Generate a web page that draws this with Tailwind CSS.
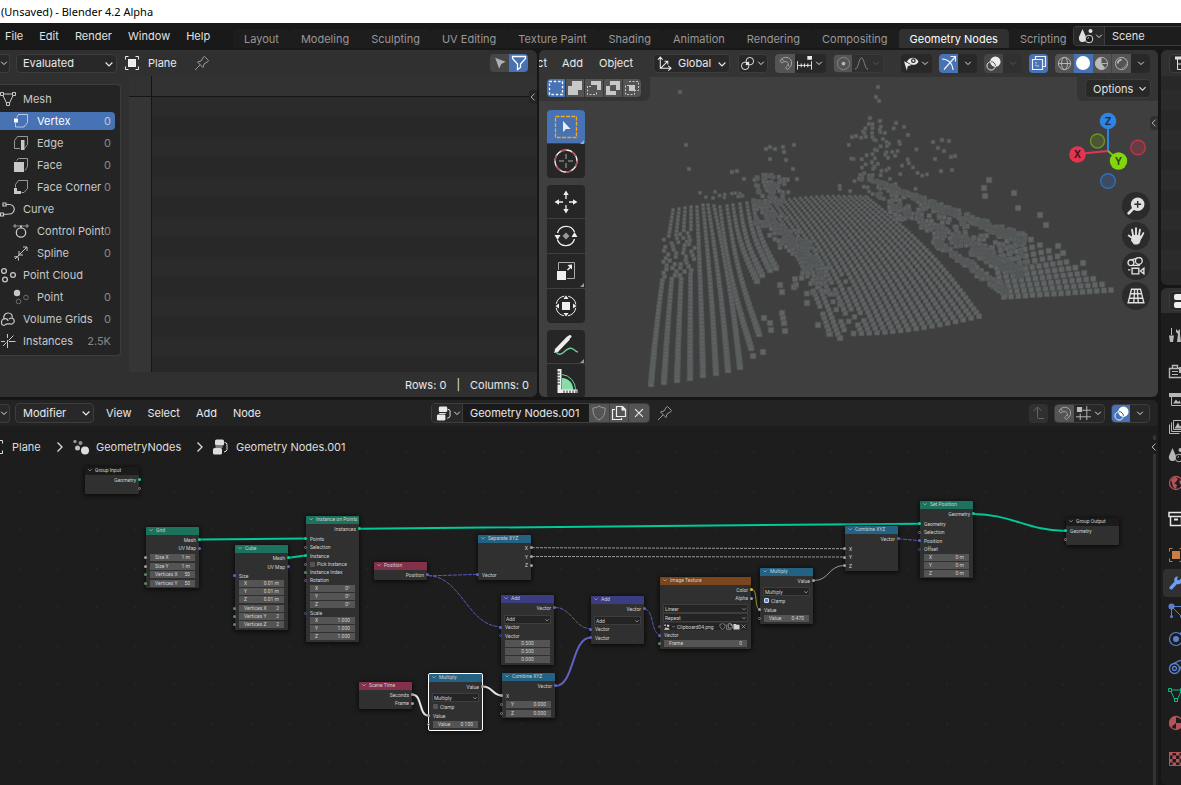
<!DOCTYPE html>
<html lang="en">
<head>
    <meta charset="UTF-8">
    <meta name="viewport" content="width=device-width, initial-scale=1.0">
    <title>(Unsaved) - Blender 4.2 Alpha</title>
    <script src="https://cdn.jsdelivr.net/npm/@tailwindcss/browser@4"></script>
</head>
<body class="h-screen overflow-hidden flex flex-col bg-[#161616] text-[#e0e0e0] text-[11px] leading-4 fill-none stroke-current font-['Inter','Liberation_Sans',sans-serif]">

<!-- Icon set, all on a 16px grid -->
<svg class="hidden">
    <symbol id="i-chev" viewBox="0 0 16 16"><path d="M3.500 6 8 10.500 12.500 6" stroke-width="1.5"/></symbol>
    <symbol id="i-left" viewBox="0 0 16 16"><path d="M10.500 2.500 5 8l5.500 5.500" stroke-width="1.500"/></symbol>
    <symbol id="i-right" viewBox="0 0 16 16"><path d="m5.500 3.500 4.500 4.500-4.500 4.500" stroke-width="1.3"/></symbol>
    <symbol id="i-object" viewBox="0 0 16 16"><path d="M1.500 4.500v-3h3M11.500 1.500h3v3M14.500 11.500v3h-3M4.500 14.500h-3v-3"/><rect x="4.500" y="4.500" width="7" height="7" fill="currentColor"/></symbol>
    <symbol id="i-pin" viewBox="0 0 16 16"><path d="m1 15 5-5M3.500 7l5.500 5.500 1-3.500 4-2.500.500-1L10.500 1.500l-1 .5L7 6z"/></symbol>
    <symbol id="i-cursor" viewBox="0 0 16 16"><path d="m2.500 2 12 4.500-5 2.500-2.500 5.500z" fill="currentColor" stroke="none"/></symbol>
    <symbol id="i-funnel" viewBox="0 0 16 16"><path d="M1.500 1.500h13v2l-5 5.500v3.500l-3 2V9l-5-5.500z" stroke-width="1.3"/></symbol>
    <symbol id="i-mesh" viewBox="0 0 16 16"><path d="M4 3h8M3 4.500l3.500 7.500M13 4.500l-3.500 7.500"/><path d="M.500 1.500h3v3h-3zM12.500 1.500h3v3h-3zM6.500 11.500h3v3h-3z"/></symbol>
    <symbol id="i-vertex" viewBox="0 0 16 16"><path d="M3.500 4.500 5.500 1.500h9v8l-3.500 4.500H2.500v-4" opacity=".6"/><path d="M1 5.500h4v4H1z" fill="currentColor" stroke="none"/></symbol>
    <symbol id="i-edge" viewBox="0 0 16 16"><path d="M7 13.500H1.500V5.500l3-4h10v8l-3 4" opacity=".7"/><path d="M8 5h3.500v10H8z" fill="currentColor" stroke="none"/></symbol>
    <symbol id="i-face" viewBox="0 0 16 16"><path d="M3.500 3.500l2-2h9v8l-2.500 4" opacity=".7"/><path d="M1 5h10v10H1z" fill="currentColor" stroke="none"/></symbol>
    <symbol id="i-corner" viewBox="0 0 16 16"><path d="M2.500 8.500V5.500l3-4h9v8l-3.500 4H8.500" opacity=".7"/><path d="M1 9h3v3h4v3H1z" fill="currentColor" stroke="none"/></symbol>
    <symbol id="i-curve" viewBox="0 0 16 16"><path d="M6 3.500h3.500a4.500 4.500 0 0 1 0 9.500L4 13.500M3 2h3v3H3zM.500 12h3v3h-3z" stroke-width="1.200"/></symbol>
    <symbol id="i-cpoint" viewBox="0 0 16 16"><circle cx="8" cy="9.500" r="4.700" stroke-width="1.300"/><path d="M4 3h8" opacity=".6"/><path d="M1 2h2v2H1zM13 2h2v2h-2z" opacity=".7"/><path d="M7 2.500h2v2H7z" fill="currentColor" stroke="none"/></symbol>
    <symbol id="i-spline" viewBox="0 0 16 16"><path d="m2 14 12-12M10 2h4v4M6 6v4h4M1 12l4-.5.500 4"/></symbol>
    <symbol id="i-pcloud" viewBox="0 0 16 16" stroke-width="1.300"><circle cx="4" cy="4" r="2.400"/><circle cx="13" cy="8" r="2.400"/><circle cx="5" cy="12.500" r="2.400"/></symbol>
    <symbol id="i-point" viewBox="0 0 16 16"><circle cx="4" cy="4" r="3.200" fill="currentColor" stroke="none"/><g opacity=".45"><circle cx="13" cy="8.500" r="2.300"/><circle cx="5.500" cy="12.500" r="2.300"/></g></symbol>
    <symbol id="i-volume" viewBox="0 0 16 16"><path d="M4 8c-1-3 1-6 4-6s5 2 4 5c3 1 3 5 0 6-2 .5-5-1-6.500.500-1 1.500-4 1-4-1.500S2 8 4 8zM4 8c2-1 4 0 4 2M12 7c-1 0-2 0-3 1" stroke-width="1.200"/></symbol>
    <symbol id="i-instance" viewBox="0 0 16 16"><path d="M1 8.500h4M7.500 1v4M7.500 7v8M9 8.500h6.500M8.500 7.500l5-5M6.500 9.500l-3.500 3.500"/></symbol>
    <symbol id="i-axes" viewBox="0 0 16 16"><path d="M3.500 1v12h11M1 4l2.500-3L6 4M12 10.500l3 2.500-3 2.500M4 13l7-7M8 5.500h3.500v3.500" stroke-width="1.100"/></symbol>
    <symbol id="i-pivot" viewBox="0 0 16 16"><circle cx="10.500" cy="5.500" r="4"/><circle cx="5.500" cy="10.500" r="4"/><path d="m6.500 9.500 3-3" stroke-width="2"/></symbol>
    <symbol id="i-magnet" viewBox="0 0 16 16"><path d="M2 5.500 4.500 2.500C9 0 14.500 2 14.500 7.500c0 3-1.500 4.500-4.500 7L8 12.500c3-2.500 4-4 2.500-5.500S6.500 5.500 4 7.500z"/><path d="m4 3 2 2.500M12 11l-2-1.500"/></symbol>
    <symbol id="i-snap" viewBox="0 0 16 16"><path d="M.500 5.500v9M15.500 5.500v9M1 10h14M4.500 8v4M8 8v4M11.500 8v4"/><path d="M11 0h5v4h-5z" fill="currentColor" stroke="none"/></symbol>
    <symbol id="i-prop" viewBox="0 0 16 16"><circle cx="8" cy="8" r="6.500" opacity=".55"/><circle cx="8" cy="8" r="2" fill="currentColor" stroke="none"/></symbol>
    <symbol id="i-falloff" viewBox="0 0 16 16"><path d="M1 14c4 0 4-12 7-12s3 12 7 12"/></symbol>
    <symbol id="i-visible" viewBox="0 0 16 16"><path d="M3 6C6 .500 13 .500 15.500 6 13 10 9 10 7 8.500" fill="currentColor" stroke="none"/><circle cx="10" cy="5" r="2.500" fill="#282828" stroke="none"/><circle cx="10" cy="5" r="1.200" fill="currentColor" stroke="none"/><path d="m0 5.500 8 4-4 1.500-1 4.500z" fill="currentColor" stroke="none"/></symbol>
    <symbol id="i-gizmo" viewBox="0 0 16 16"><path d="M1 4c6 0 10.500 4 11 11M3 14.500 14 2M9.500 1.500h5v5" stroke-width="1.200"/></symbol>
    <symbol id="i-overlay" viewBox="0 0 16 16"><circle cx="10" cy="6" r="5.500" fill="currentColor" stroke="none"/><circle cx="5.500" cy="10.500" r="4.500"/><path d="M5.500 6A4.500 4.500 0 0 1 10 10.500" stroke="#444"/></symbol>
    <symbol id="i-xray" viewBox="0 0 16 16"><path d="M1.500 4.500h10v10h-10zM4.500 4V1.500h10v10H12" stroke-width="1.200"/><path d="M5 7v4h4" stroke-dasharray="1.500 1.200"/></symbol>
    <symbol id="i-wire" viewBox="0 0 16 16"><circle cx="8" cy="8" r="6.500"/><ellipse cx="8" cy="8" rx="3.200" ry="6.500"/><path d="M1.500 8h13"/></symbol>
    <symbol id="i-solid" viewBox="0 0 16 16"><circle cx="8" cy="8" r="7" fill="currentColor" stroke="none"/></symbol>
    <symbol id="i-matprev" viewBox="0 0 16 16"><circle cx="8" cy="8" r="6.500"/><path d="M8 1.500A6.500 6.500 0 1 0 12 13L8 8z" fill="currentColor" stroke="none"/><path d="m8 8 6.500 0" /></symbol>
    <symbol id="i-rendered" viewBox="0 0 16 16"><circle cx="8" cy="8" r="6.500"/><path d="M4 8a4 4 0 0 1 4-4" stroke-width="2"/><path d="M8 13a5 5 0 0 0 5-5" opacity=".6"/></symbol>
    <symbol id="i-s1" viewBox="0 0 16 16"><path d="M1.500 1.500h13v13h-13z" stroke-dasharray="2.400 1.930" stroke-width="1.300"/></symbol>
    <symbol id="i-s2" viewBox="0 0 16 16"><path d="M5 1h10v9h-4v5H1V6h4z" fill="currentColor" stroke="none"/></symbol>
    <symbol id="i-s3" viewBox="0 0 16 16"><path d="M5 1h10v9h-4V5H5z" fill="currentColor" stroke="none"/><path d="M1.500 6v8.500h9V11M3 6.500h3" stroke-dasharray="2 1.500"/></symbol>
    <symbol id="i-s4" viewBox="0 0 16 16"><path d="M5 1h10v9h-4v5H1V6h4zm0 5v5h6V5H6z" fill="currentColor" fill-rule="evenodd" stroke="none"/></symbol>
    <symbol id="i-s5" viewBox="0 0 16 16"><path d="M5 5h6v6H5z" fill="currentColor" stroke="none"/><path d="M5 1.500h9.500v9H11M5 5.500H1.500v9h9V11" stroke-dasharray="2 1.500"/></symbol>
    <symbol id="i-scene" viewBox="0 0 16 16"><path d="M4.500 1 8 9c.5 3-1 5-3.500 5S.5 12 1 9z" fill="currentColor" stroke="none"/><circle cx="11" cy="11" r="3.800" fill="#1d1d1d"/><circle cx="12.500" cy="3" r="2" fill="currentColor" stroke="none"/><path d="M9.500 10.500 11 9.500"/></symbol>
    <symbol id="i-outliner" viewBox="0 0 16 16"><path d="M1 1.500h7v3H1z" fill="currentColor" stroke="none"/><path d="M3.500 4v10.500H9M3.500 9H9" /><path d="M10 7.500h6v3h-6zM10 13h6v3h-6z" fill="currentColor" stroke="none"/></symbol>
    <symbol id="i-geo" viewBox="0 0 16 16" stroke="none" fill="currentColor"><circle cx="12" cy="11.500" r="4"/><circle cx="4.500" cy="9" r="2.500" opacity=".85"/><circle cx="7.500" cy="4" r="2" opacity=".6"/><circle cx="2" cy="2.500" r="1.700" opacity=".6"/></symbol>
    <symbol id="i-tree" viewBox="0 0 16 16"><g fill="currentColor" stroke="none"><rect x="3" y=".5" width="9" height="6" rx="1.500"/><rect x="1" y="9" width="9" height="6.500" rx="1.500"/></g><path d="M3.500 8h7" stroke-width="1"/><path d="M12.500 3.500q2.500 0 2.500 2v5q0 2-3 2.500"/></symbol>
    <symbol id="i-shield" viewBox="0 0 16 16"><path d="M8 1q2 2 6 2c.5 6-2 10-6 12C4 13 1.500 9 2 3q4 0 6-2z"/></symbol>
    <symbol id="i-copy" viewBox="0 0 16 16"><path d="M5.500 1.500h6l3 3v7h-9zM4 4.500H1.500v10h9V13" stroke-width="1.200"/><path d="M10.500 1v4.500H15z" fill="currentColor" stroke="none"/></symbol>
    <symbol id="i-x" viewBox="0 0 16 16"><path d="m3.500 3.500 9 9M12.500 3.500l-9 9" stroke-width="1.200"/></symbol>
    <symbol id="i-up" viewBox="0 0 16 16"><path d="M6.500 2v10.500q0 1 1 1H13M2.500 6l4-4 4 4"/></symbol>
    <symbol id="i-grid" viewBox="0 0 16 16"><path d="M4.500 8v7M11.500 0v15M7 4.500h9M0 11.500h16"/><path d="M1 1h5.500v5.500H1z" fill="currentColor" stroke="none"/></symbol>
    <symbol id="i-zoom" viewBox="0 0 16 16"><circle cx="9.500" cy="6.500" r="6" fill="currentColor" stroke="none"/><path d="m5.500 10.500-4 4" stroke-width="2.400" stroke-linecap="round"/><path d="M9.500 3.500v6M6.500 6.500h6" stroke="#2b2b2b" stroke-width="1.300"/></symbol>
    <symbol id="i-hand" viewBox="0 0 16 16"><path d="M5.500 8 4.500 2.500M8 7.500V1M10.500 8l1-5.500M12.500 9.500l2-4M5 10 1.500 7.500" stroke-width="1.700" stroke-linecap="round"/><path d="M4.700 7h6.500l2 1.500-2 6-2 1h-3L3.500 12z" fill="currentColor" stroke="none"/></symbol>
    <symbol id="i-cam" viewBox="0 0 16 16" stroke-width="1.200"><circle cx="3.500" cy="5" r="2.600"/><circle cx="10.500" cy="3.500" r="3"/><path d="M4 2.500 9 1M4.500 7.500h7"/><path d="M4.500 10h6v5h-6zM3 11.500H1M15 10v5l-3-2.500z"/></symbol>
    <symbol id="i-persp" viewBox="0 0 16 16" stroke-width="1.200"><path d="M4 2h8l3 12H1zM3 6h10M2 10h12M6.800 2 6 14M9.200 2l.8 12"/></symbol>
    <symbol id="i-tool" viewBox="0 0 16 16"><path d="M3.500 1v7" /><path d="M1 8.500h5L5 15H2zM8 2l2 2 2-2v5l1 8H9l1-8-2-2z" fill="currentColor" stroke="none"/></symbol>
    <symbol id="i-render" viewBox="0 0 16 16"><path d="M1.500 5.500h13v9h-13zM4.500 5V2.500h5V5" stroke-width="1.400"/><path d="M4 8.500h6M4 11.500h6"/><path d="M11 4h4v6h-4z" fill="currentColor" stroke="none"/></symbol>
    <symbol id="i-output" viewBox="0 0 16 16"><path d="M1 2h14v4H1z" fill="currentColor" stroke="none"/><path d="M3.500 6v8.500h10V6"/><path d="m5 12.500 3-4 2 2.500 1.500-1.500 1.500 3z" fill="currentColor" stroke="none"/></symbol>
    <symbol id="i-layers" viewBox="0 0 16 16"><path d="M5.500 1.500h10v9h-10zM3.500 3.500v9h10M1.500 5.500v9h10"/><path d="m6.500 9.500 3.500-6 2 4 1-1 2 3z" fill="currentColor" stroke="none"/></symbol>
    <symbol id="i-world" viewBox="0 0 16 16"><circle cx="8" cy="8" r="6.500" stroke-width="1.300"/><path d="m3 5 4-3 3 2-2 3-2 1 3 2-1 4-3-2-1-4zM11 6l3-1v5l-2-1z" fill="currentColor" stroke="none"/></symbol>
    <symbol id="i-coll" viewBox="0 0 16 16"><path d="M1 1.500h14v4H1zM2.500 6v8.500h11V6" stroke-width="1.500"/><path d="M6 8.500h4" stroke-width="2"/></symbol>
    <symbol id="i-wrench" viewBox="0 0 16 16"><path d="M14 2.500 11 5.500 9 4.500l1-3C7 1 5.500 4 6.500 6.500L1.500 12q-.5 3 2.500 2.500l5-5.500c3 1 6-1.500 5-6.500z" fill="currentColor" stroke="none"/></symbol>
    <symbol id="i-parts" viewBox="0 0 16 16"><path d="m4 4 9 9M4 3.500h9M3.500 4v9"/><g fill="currentColor" stroke="none"><circle cx="3.500" cy="3.500" r="3"/><circle cx="14" cy="3.500" r="1.300"/><circle cx="3.500" cy="13.500" r="1.500"/><circle cx="13.500" cy="13.500" r="1.500"/></g></symbol>
    <symbol id="i-phys" viewBox="0 0 16 16"><circle cx="8" cy="8" r="6.500" stroke-width="1.200"/><circle cx="8" cy="8" r="3" fill="currentColor" stroke="none"/><circle cx="13.500" cy="2.500" r="1.500" fill="currentColor" stroke="none"/></symbol>
    <symbol id="i-constr" viewBox="0 0 16 16" stroke-width="1.300"><circle cx="6.500" cy="9.500" r="5"/><circle cx="6.500" cy="9.500" r="2"/><path d="M2.500 6 12 1.500q3 0 3 2.500L11 12"/></symbol>
    <symbol id="i-mat" viewBox="0 0 16 16"><circle cx="8" cy="8" r="6.500" stroke-width="1.300"/><path d="M8 8V1.500A6.500 6.500 0 0 0 3 12.500zM8 8h6.500A6.500 6.500 0 0 1 8 14.500z" fill="currentColor" stroke="none"/></symbol>
    <symbol id="i-tex" viewBox="0 0 16 16"><path d="M1.500 1.500h13v13h-13z"/><path d="M1 1h3.500v3.500H1zM8 1h3.500v3.500H8zM4.500 4.500H8V8H4.500zM11.500 4.500H15V8h-3.500zM1 8h3.500v3.500H1zM8 8h3.500v3.500H8zM4.500 11.500H8V15H4.500zM11.500 11.500H15V15h-3.500z" fill="currentColor" stroke="none"/></symbol>
    <symbol id="i-image" viewBox="0 0 16 16"><path d="M1 1h4v4H1zM8 2h6v5H8z" fill="currentColor" stroke="none"/><path d="m0 15 5-7 3 4 3-3 4 6z" fill="currentColor" stroke="none"/></symbol>
    <symbol id="i-folder" viewBox="0 0 16 16"><path d="M1 2h6l1 2h7v11H1z" fill="currentColor" stroke="none"/></symbol>
</svg>

<!-- Window title -->
<header class="h-[23px] shrink-0 bg-white text-black pl-px leading-[23px] font-['Noto_Sans','Liberation_Sans',sans-serif] text-[11px] whitespace-nowrap">(Unsaved) - Blender 4.2 Alpha</header>

<!-- Top bar -->
<div class="h-[27px] shrink-0 bg-[#181818] flex whitespace-nowrap overflow-hidden">
    <nav class="flex w-[233px] shrink-0 pl-[5px] gap-4 leading-[26px] h-[26px]">
        <button>File</button>
        <button>Edit</button>
        <button>Render</button>
        <button>Window</button>
        <button>Help</button>
    </nav>
    <nav class="flex flex-1 min-w-0 overflow-hidden mt-[6px] h-[19px] leading-[20px] text-[#989898]">
        <a href="#" class="px-[11px] bg-[#1d1d1d] rounded-t">Layout</a>
        <a href="#" class="px-[11px] bg-[#1d1d1d] rounded-t">Modeling</a>
        <a href="#" class="px-[11px] bg-[#1d1d1d] rounded-t">Sculpting</a>
        <a href="#" class="px-[11px] bg-[#1d1d1d] rounded-t">UV Editing</a>
        <a href="#" class="px-[11px] bg-[#1d1d1d] rounded-t">Texture Paint</a>
        <a href="#" class="px-[11px] bg-[#1d1d1d] rounded-t">Shading</a>
        <a href="#" class="px-[11px] bg-[#1d1d1d] rounded-t">Animation</a>
        <a href="#" class="px-[11px] bg-[#1d1d1d] rounded-t">Rendering</a>
        <a href="#" class="px-[11px] bg-[#1d1d1d] rounded-t">Compositing</a>
        <a href="#" class="px-[11px] bg-[#303030] text-white rounded-t">Geometry Nodes</a>
        <a href="#" class="pl-[11px] bg-[#1d1d1d] rounded-t">Scripting</a>
    </nav>
    <div class="flex w-[108px] shrink-0 mt-[3px] h-5 border border-r-0 border-[#3d3d3d] rounded-l bg-[#1d1d1d]">
        <button class="flex items-center w-[31px] pl-1 border-r border-[#3d3d3d] bg-[#282828]" aria-label="Browse scene"><svg class="size-4"><use href="#i-scene"/></svg><svg class="size-[10px]"><use href="#i-chev"/></svg></button>
        <input class="flex-1 min-w-0 pl-[7px] outline-none" aria-label="Scene name" value="Scene">
    </div>
</div>

<div class="flex-1 min-h-0 flex gap-[3px]">
<main class="flex-1 min-w-0 grid grid-cols-[537fr_619fr] grid-rows-[347fr_385fr] gap-x-[2px] gap-y-[3px]">

    <!-- Spreadsheet editor -->
    <section class="relative min-w-0 min-h-0 bg-[#303030] rounded-r-md overflow-hidden flex flex-col">
        <div class="h-[26px] shrink-0 flex items-center pr-[9px] text-white/90">
            <button class="flex items-center justify-end w-[10px] h-[19px] mr-[6px] bg-[#282828] border border-l-0 border-[#3d3d3d] rounded-r" aria-label="Editor type"><svg class="size-[10px] shrink-0"><use href="#i-chev"/></svg></button>
            <div class="relative w-[101px]">
                <select aria-label="Object evaluation state" class="appearance-none w-full h-[19px] pl-[6px] bg-[#282828] border border-[#3d3d3d] rounded outline-none"><option>Evaluated</option><option>Original</option></select>
                <svg class="absolute right-[2px] top-1 size-3 pointer-events-none"><use href="#i-chev"/></svg>
            </div>
            <svg class="size-4 ml-[7px]"><use href="#i-object"/></svg>
            <span class="ml-2 w-[30px]">Plane</span>
            <button class="ml-4 text-[#999]" aria-label="Pin"><svg class="size-4"><use href="#i-pin"/></svg></button>
            <div class="flex ml-auto">
                <button class="w-[19px] h-[18px] flex items-center justify-center bg-[#464646] text-[#b0b0b0] rounded-l" aria-label="Selected only"><svg class="size-[14px]"><use href="#i-cursor"/></svg></button>
                <button class="w-[19px] h-[18px] flex items-center justify-center bg-[#4772b3] text-white rounded-r" aria-label="Filter"><svg class="size-4"><use href="#i-funnel"/></svg></button>
            </div>
        </div>
        <div class="flex-1 min-h-0 flex">
            <div class="w-[129px] shrink-0 pt-2">
                <ul class="w-[121px] pt-[3px] pb-[3px] bg-[#242424] border border-l-0 border-[#3d3d3d] rounded-r text-[#c8c8c8]" id="domains"></ul>
            </div>
            <div class="flex-1 min-w-0 flex flex-col">
                <div class="h-5 shrink-0 flex bg-[#323232]"><div class="w-[23px] border-r border-[#151515]"></div></div>
                <div class="flex-1 flex border-t border-[#151515] bg-[repeating-linear-gradient(#2b2b2b_0_20px,#282828_20px_40px)]"><div class="w-[23px] bg-[#353535] border-r border-[#151515]"></div></div>
            </div>
        </div>
        <div class="h-[25px] shrink-0 flex items-center justify-end pr-2 gap-[10px] text-white/90"><span>Rows: 0</span><span>|</span><span>Columns: 0</span></div>
        <button class="absolute right-0 top-10 w-2 h-[14px] flex items-center justify-center bg-[#252525] rounded-l-sm text-[#bbb]" aria-label="Show sidebar"><svg class="size-[10px] shrink-0"><use href="#i-left"/></svg></button>
    </section>

    <!-- 3D viewport -->
    <section class="relative min-w-0 min-h-0 bg-[#3f3f3f] rounded-md overflow-hidden">
        <svg class="absolute inset-0 size-full" viewBox="539 50 619 347" preserveAspectRatio="xMidYMid slice" aria-label="Point instances">
            <path id="cloud" fill="#616464" stroke="#555858" stroke-width="0.700"/>
        </svg>
        <div class="relative h-[27px] flex items-center bg-[#343434] pb-px pr-2 text-white/90 whitespace-nowrap">
            <span class="w-2 mr-[15px] flex justify-end">ct</span>
            <button class="mr-4">Add</button>
            <button>Object</button>
            <div class="flex ml-auto gap-[7px] h-[19px]">
                <div class="relative w-[77px] mr-px">
                    <svg class="absolute left-1 top-[2px] size-[15px] pointer-events-none"><use href="#i-axes"/></svg>
                    <select aria-label="Transform orientation" class="appearance-none w-full h-full pl-[24px] bg-[#282828] border border-[#3d3d3d] rounded outline-none"><option>Global</option><option>Local</option></select>
                    <svg class="absolute right-[2px] top-1 size-3 pointer-events-none"><use href="#i-chev"/></svg>
                </div>
                <button class="w-[30px] flex items-center justify-center gap-px bg-[#282828] border border-[#3d3d3d] rounded" aria-label="Pivot point"><svg class="size-[15px]"><use href="#i-pivot"/></svg><svg class="size-[10px]"><use href="#i-chev"/></svg></button>
                <div class="flex w-[51px] rounded overflow-hidden bg-[#282828]">
                    <button class="w-5 flex items-center justify-center bg-[#545454] text-[#aaa]" aria-label="Snap"><svg class="size-[15px]"><use href="#i-magnet"/></svg></button>
                    <button class="flex-1 flex items-center justify-center gap-[2px]" aria-label="Snap to"><svg class="size-[15px]"><use href="#i-snap"/></svg><svg class="size-[10px]"><use href="#i-chev"/></svg></button>
                </div>
                <div class="flex w-[51px] rounded overflow-hidden bg-[#303030] border border-[#3a3a3a]">
                    <button class="w-[18px] flex items-center justify-center bg-[#545454] text-[#b5b5b5]" aria-label="Proportional editing"><svg class="size-[15px]"><use href="#i-prop"/></svg></button>
                    <button class="flex-1 flex items-center justify-center gap-[2px] text-[#888]" aria-label="Falloff"><svg class="size-[15px]"><use href="#i-falloff"/></svg><svg class="size-[10px] text-[#555]"><use href="#i-chev"/></svg></button>
                </div>
                <button class="w-[31px] ml-[10px] flex items-center justify-center gap-px bg-[#282828] rounded" aria-label="Object types visibility"><svg class="size-[15px]"><use href="#i-visible"/></svg><svg class="size-[10px]"><use href="#i-chev"/></svg></button>
                <div class="flex w-[38px] rounded overflow-hidden bg-[#282828]">
                    <button class="w-[19px] flex items-center justify-center bg-[#4772b3]" aria-label="Gizmos"><svg class="size-4"><use href="#i-gizmo"/></svg></button>
                    <button class="flex-1 flex items-center justify-center" aria-label="Gizmo settings"><svg class="size-[10px]"><use href="#i-chev"/></svg></button>
                </div>
                <div class="flex w-[38px] rounded overflow-hidden bg-[#303030]">
                    <button class="w-[19px] flex items-center justify-center bg-[#464646]" aria-label="Overlays"><svg class="size-[15px]"><use href="#i-overlay"/></svg></button>
                    <button class="flex-1 flex items-center justify-center text-[#555]" aria-label="Overlay settings"><svg class="size-[10px]"><use href="#i-chev"/></svg></button>
                </div>
                <button class="w-[19px] flex items-center justify-center bg-[#4772b3] rounded-sm" aria-label="X-ray"><svg class="size-4"><use href="#i-xray"/></svg></button>
                <div class="flex w-[95px] rounded overflow-hidden bg-[#545454] text-[#bbb]">
                    <button class="flex-1 flex items-center justify-center" aria-label="Wireframe"><svg class="size-[15px]"><use href="#i-wire"/></svg></button>
                    <button class="flex-1 flex items-center justify-center bg-[#4772b3] text-white" aria-label="Solid"><svg class="size-4"><use href="#i-solid"/></svg></button>
                    <button class="flex-1 flex items-center justify-center border-r border-[#444]" aria-label="Material preview"><svg class="size-[15px]"><use href="#i-matprev"/></svg></button>
                    <button class="flex-1 flex items-center justify-center" aria-label="Rendered"><svg class="size-[15px]"><use href="#i-rendered"/></svg></button>
                    <button class="flex-1 flex items-center justify-center bg-[#282828] text-white/90" aria-label="Shading settings"><svg class="size-[10px]"><use href="#i-chev"/></svg></button>
                </div>
            </div>
        </div>
        <div class="relative flex justify-between">
            <div class="w-[111px] h-6 pl-2 pt-[2px] bg-[#343434] rounded-br-md">
                <div class="flex w-[94px] h-[18px] gap-px rounded overflow-hidden text-[#c8c8c8]">
                    <button class="flex-1 flex items-center justify-center bg-[#4772b3] text-white" aria-label="Set selection"><svg class="size-4"><use href="#i-s1"/></svg></button>
                    <button class="flex-1 flex items-center justify-center bg-[#545454]" aria-label="Extend selection"><svg class="size-4"><use href="#i-s2"/></svg></button>
                    <button class="flex-1 flex items-center justify-center bg-[#545454]" aria-label="Subtract selection"><svg class="size-4"><use href="#i-s3"/></svg></button>
                    <button class="flex-1 flex items-center justify-center bg-[#545454]" aria-label="Invert selection"><svg class="size-4"><use href="#i-s4"/></svg></button>
                    <button class="flex-1 flex items-center justify-center bg-[#545454]" aria-label="Intersect selection"><svg class="size-4"><use href="#i-s5"/></svg></button>
                </div>
            </div>
            <div class="w-[81px] h-6 pl-2 pt-[2px] bg-[#343434] rounded-bl-md">
                <button class="flex items-center justify-between w-[66px] h-[19px] pl-[7px] pr-[2px] bg-[#282828] border border-[#3d3d3d] rounded">Options<svg class="size-[11px]"><use href="#i-chev"/></svg></button>
            </div>
        </div>

        <!-- Tools -->
        <div class="relative w-[38px] ml-2 mt-[9px] flex flex-col gap-[7px]">
            <div class="flex flex-col gap-px rounded overflow-hidden">
                <button class="h-[33px] flex items-center justify-center bg-[#4772b3]" aria-label="Select box"><svg class="size-[38px] shrink-0" viewBox="0 0 38 38" fill="none" stroke="none"><path d="M8.500 8.500h21v21h-21z" stroke="#f5a623" stroke-width="1.300" stroke-dasharray="4 1.250"/><path d="m16 13 7.500 8-4.500 0-3 3z" fill="#eee"/><path d="M37 32v4h-4z" fill="#9ab"/></svg></button>
                <button class="h-[34px] flex items-center justify-center bg-[#262626]" aria-label="Cursor"><svg class="size-[38px] shrink-0" viewBox="0 0 38 38" fill="none" stroke="none"><circle cx="19" cy="19" r="11" stroke="#eee" stroke-width="1.300"/><circle cx="19" cy="19" r="11" stroke="#b04048" stroke-width="1.300" stroke-dasharray="5.760 5.760"/><path d="M19 12v5M19 21v5M12 19h5M21 19h5" stroke="#aaa"/></svg></button>
            </div>
            <div class="flex flex-col gap-px rounded overflow-hidden">
                <button class="h-[33px] flex items-center justify-center bg-[#262626]" aria-label="Move"><svg class="size-[38px] shrink-0" viewBox="0 0 38 38" fill="#eee" stroke="none"><path d="m19 7.500 2.700 4.500h-5.400zM19 30.500l2.700-4.500h-5.400zM7.500 19l4.500-2.700v5.400zM30.500 19 26 16.300v5.400z"/><path d="M19 12v4M19 22v4M12 19h4M22 19h4" stroke="#eee" stroke-width="1.300"/></svg></button>
                <button class="h-[34px] flex items-center justify-center bg-[#262626]" aria-label="Rotate"><svg class="size-[38px] shrink-0" viewBox="0 0 38 38" fill="#eee" stroke="none"><path d="M10.500 16a9 9 0 0 1 17-1M27.500 22a9 9 0 0 1-17 1" fill="none" stroke="#eee" stroke-width="1.300"/><path d="M7.500 18h6l-3 5zM24.500 20h6l-3-5z"/><path d="m19 15.500 3.500 3.500-3.500 3.500-3.500-3.500z" fill="#999"/></svg></button>
                <button class="h-[34px] flex items-center justify-center bg-[#262626]" aria-label="Scale"><svg class="size-[38px] shrink-0" viewBox="0 0 38 38" fill="#eee" stroke="none"><path d="M11.500 18v-7.500h16v16H20" fill="none" stroke="#aaa"/><path d="M10 19h9v9h-9zM25 12.500v5L20.500 13zM20 17.500l3-3 1 1-3 3z"/><path d="M37 31v4h-4z" fill="#999"/></svg></button>
                <button class="h-[34px] flex items-center justify-center bg-[#262626]" aria-label="Transform"><svg class="size-[38px] shrink-0" viewBox="0 0 38 38" fill="#eee" stroke="none"><circle cx="19" cy="19" r="10" fill="none" stroke="#eee" stroke-dasharray="11.700 4" stroke-dashoffset="-2"/><path d="M15 15h8v8h-8zM19 8.500l2.500 3.500h-5zM19 29.500l2.500-3.500h-5zM8.500 19l3.500-2.500v5zM29.500 19 26 16.500v5z"/></svg></button>
            </div>
            <div class="flex flex-col gap-px rounded overflow-hidden">
                <button class="h-[33px] flex items-center justify-center bg-[#262626]" aria-label="Annotate"><svg class="size-[38px] shrink-0" viewBox="0 0 38 38" fill="none" stroke="none"><path d="M9 24c2 3 5 3 8 0s6-5 9-3 3 3 5 3" stroke="#6fcf97" stroke-width="1.300"/><path d="M9 23 21.500 10" stroke="#eee" stroke-width="4" /><path d="m7 25 1.500-4.500 3 3z" fill="#eee"/><path d="m21 10 2-1.500" stroke="#eee" stroke-width="3" stroke-linecap="round"/><path d="M37 31v4h-4z" fill="#999"/></svg></button>
                <button class="h-[34px] flex items-center justify-center bg-[#262626]" aria-label="Measure"><svg class="size-[38px] shrink-0" viewBox="0 0 38 38" stroke="none"><path d="M15 16a11 11 0 0 1 11 12H15z" fill="#8adbab"/><path d="M15 12.500a15 15 0 0 1 13.500 15" fill="none" stroke="#6fcf97"/><path d="M10.500 7h4v20.500h16V31h-20z" fill="#eee"/><path d="M10 10h3M10 13h3M10 16h3M10 19h3M10 22h3M17 31v-2.500M20 31v-2.500M23 31v-2.500M26 31v-2.500M29 31v-2.500" stroke="#262626"/></svg></button>
            </div>
        </div>

        <!-- Navigation gizmo -->
        <svg class="absolute right-[8px] top-[58px] w-[82px] h-[84px]" viewBox="1068 108 82 84" fill="none" stroke="none" stroke-width="2" font-size="10" font-weight="700" text-anchor="middle" aria-label="View orientation">
            <circle cx="1097.500" cy="141" r="7" stroke="#6a951f" stroke-width="1.400" fill="#4b5634"/>
            <circle cx="1138" cy="147.500" r="7.300" stroke="#bb3549" stroke-width="1.400" fill="#673d44"/>
            <circle cx="1108" cy="181" r="7.300" stroke="#2e6fb9" stroke-width="1.400" fill="#3b4c62"/>
            <path d="M1108 151v-24" stroke="#2f83e3"/><path d="m1108 151-26 2.500" stroke="#e0364f"/><path d="m1108 151 7 6" stroke="#83b90d"/>
            <circle cx="1108" cy="121" r="8.300" fill="#2f83e3"/><circle cx="1077.500" cy="154.500" r="8.300" fill="#e0364f"/><circle cx="1118.500" cy="161" r="8.700" fill="#83d60d"/>
            <text x="1108" y="124.700" fill="#14304f">Z</text><text x="1077.500" y="158" fill="#4d1019">X</text><text x="1118.500" y="164.700" fill="#2d4a08">Y</text>
        </svg>
        <div class="absolute right-2 top-[142px] flex flex-col gap-[2px]">
            <button class="size-7 rounded-full bg-[#2b2b2b] flex items-center justify-center" aria-label="Zoom"><svg class="size-[18px]"><use href="#i-zoom"/></svg></button>
            <button class="size-7 rounded-full bg-[#2b2b2b] flex items-center justify-center" aria-label="Pan"><svg class="size-[18px]"><use href="#i-hand"/></svg></button>
            <button class="size-7 rounded-full bg-[#2b2b2b] flex items-center justify-center" aria-label="Camera view"><svg class="size-[18px]"><use href="#i-cam"/></svg></button>
            <button class="size-7 rounded-full bg-[#2b2b2b] flex items-center justify-center" aria-label="Perspective"><svg class="size-[18px]"><use href="#i-persp"/></svg></button>
        </div>
        <button class="absolute right-0 top-[66px] w-2 h-[14px] flex items-center justify-center bg-[#303030] rounded-l-sm text-[#bbb]" aria-label="Show sidebar"><svg class="size-[10px] shrink-0"><use href="#i-left"/></svg></button>
    </section>

    <!-- Geometry node editor -->
    <section class="relative col-span-2 min-w-0 min-h-0 bg-[#1d1d1d] rounded-tr-md overflow-hidden">
        <div class="absolute inset-0" id="canvas">
            <svg class="absolute inset-0 size-full" fill="none" stroke="none">
                <pattern id="dots" x="18.500" y="12.900" width="38.650" height="38.700" patternUnits="userSpaceOnUse"><circle cx="0.900" cy="0.900" r="0.900" fill="#2a2a2a"/></pattern>
                <rect width="100%" height="100%" fill="url(#dots)"/>
                <g stroke="#00c99a" stroke-width="2"><path d="M200 139.500 306 138.500M289 157.700l16-2.200M360 128.700l560-5"/><path d="M974 114c36 0 55 17 92 17"/></g>
                <g stroke="#5b5bb8" stroke-width="1"><path d="M428 175.700c15 0 30-1 49-1.200M428 175.700c33 0 40 51 73 51M555 207.500c17 0 19 21.200 36 21.200M645 209.500c9 0 6 25 15 25M898 138.700l22 2" stroke-dasharray="4 1"/><path d="M555 286c20 0 16-48.500 36-48.500" stroke="#6363c7" stroke-width="2"/></g>
                <g stroke="#999" stroke-width="1"><path d="M532 147.700l312 1M532 156.500l312 .5" stroke-dasharray="3 1"/><path d="M814 180.500c15 0 15-15 30-15"/><path d="M752 189.500c6 0 2 20 8 20" stroke="#a3a33c"/></g>
                <g stroke="#e6e6e6" stroke-width="2"><path d="M413 294.700c9 0 6 20.800 15 20.800M483 286.500c10 0 9 9 19 9"/></g>
            </svg>
        </div>
        <div class="relative h-[26px] bg-[#232323] flex items-center pr-2 text-white/90 whitespace-nowrap">
            <button class="flex items-center justify-end w-[10px] h-[19px] mr-[5px] bg-[#282828] border border-l-0 border-[#3d3d3d] rounded-r" aria-label="Editor type"><svg class="size-[10px] shrink-0"><use href="#i-chev"/></svg></button>
            <div class="relative w-[79px] mr-3">
                <select aria-label="Geometry nodes context" class="appearance-none w-full h-[20px] pl-[7px] bg-[#282828] border border-[#3d3d3d] rounded outline-none"><option>Modifier</option><option>Tool</option></select>
                <svg class="absolute right-[2px] top-1 size-3 pointer-events-none"><use href="#i-chev"/></svg>
            </div>
            <nav class="flex gap-4">
                <button>View</button>
                <button>Select</button>
                <button>Add</button>
                <button>Node</button>
            </nav>
            <div class="absolute left-[431px] flex items-center">
                <div class="flex w-[219px] h-5 border border-[#3d3d3d] rounded overflow-hidden">
                    <button class="flex items-center w-[31px] shrink-0 pl-1 border-r border-[#3d3d3d] bg-[#282828]" aria-label="Browse node tree"><svg class="size-[15px]"><use href="#i-tree"/></svg><svg class="size-[10px] ml-px"><use href="#i-chev"/></svg></button>
                    <input class="flex-1 min-w-0 pl-[7px] bg-[#1a1a1a] outline-none" aria-label="Node tree name" value="Geometry Nodes.001">
                    <button class="w-5 flex items-center justify-center bg-[#545454] text-[#999]" aria-label="Fake user"><svg class="size-4"><use href="#i-shield"/></svg></button>
                    <button class="w-5 flex items-center justify-center bg-[#545454] border-x border-[#3d3d3d]" aria-label="New node tree"><svg class="size-4"><use href="#i-copy"/></svg></button>
                    <button class="w-5 flex items-center justify-center bg-[#545454]" aria-label="Unlink"><svg class="size-[14px]"><use href="#i-x"/></svg></button>
                </div>
                <button class="ml-[7px] text-[#999]" aria-label="Pin"><svg class="size-4"><use href="#i-pin"/></svg></button>
            </div>
            <div class="flex ml-auto gap-[6px] h-[19px]">
                <button class="w-[19px] flex items-center justify-center bg-[#303030] rounded text-[#666]" aria-label="Parent node tree"><svg class="size-4"><use href="#i-up"/></svg></button>
                <div class="flex w-[51px] rounded overflow-hidden bg-[#282828] border border-[#3d3d3d]">
                    <button class="w-[19px] shrink-0 flex items-center justify-center bg-[#545454] text-[#aaa]" aria-label="Snap"><svg class="size-[15px]"><use href="#i-magnet"/></svg></button>
                    <button class="flex-1 flex items-center justify-center gap-[2px]" aria-label="Snap node element"><svg class="size-[15px] text-[#bbb]"><use href="#i-grid"/></svg><svg class="size-[10px]"><use href="#i-chev"/></svg></button>
                </div>
                <div class="flex w-[39px] rounded overflow-hidden bg-[#282828] border border-[#3d3d3d]">
                    <button class="w-[18px] flex items-center justify-center bg-[#4772b3] text-white" aria-label="Overlays"><svg class="size-[15px]"><use href="#i-overlay"/></svg></button>
                    <button class="flex-1 flex items-center justify-center" aria-label="Overlay settings"><svg class="size-[10px]"><use href="#i-chev"/></svg></button>
                </div>
            </div>
        </div>
        <nav class="relative flex items-center h-[42px] text-[#ddd]">
            <div class="w-[12px] overflow-hidden flex"><svg class="size-4 shrink-0 -ml-[12px]"><use href="#i-object"/></svg></div>
            <a href="#" class="w-[40px]">Plane</a>
            <svg class="size-4"><use href="#i-right"/></svg>
            <svg class="size-4 ml-[5px] mr-[7px]"><use href="#i-geo"/></svg>
            <a href="#" class="w-[96px]">GeometryNodes</a>
            <svg class="size-4"><use href="#i-right"/></svg>
            <svg class="size-4 ml-[4px] mr-[8px]"><use href="#i-tree"/></svg>
            <a href="#">Geometry Nodes.001</a>
        </nav>
        <div class="absolute right-[2px] top-[35px] bottom-0 w-[3px] bg-[#333] rounded-t"></div>
        <button class="absolute right-0 top-[40px] w-2 h-[14px] flex items-center justify-center bg-[#1d1d1d] rounded-l-sm text-[#ccc]" aria-label="Show sidebar"><svg class="size-[10px] shrink-0"><use href="#i-left"/></svg></button>
    </section>
</main>

<!-- Outliner and properties, cut by the window edge -->
<aside class="w-5 shrink-0 flex flex-col gap-[3px] overflow-hidden">
    <section class="h-[235px] shrink-0 rounded-l-md overflow-hidden bg-[repeating-linear-gradient(#2b2b2b_0_20px,#282828_20px_40px)]">
        <div class="h-[26px] flex items-center pl-2 bg-[#303030]"><button class="h-[19px] w-[30px] shrink-0 pl-1 flex items-center bg-[#282828] border border-[#3d3d3d] rounded" aria-label="Editor type"><svg class="size-4"><use href="#i-outliner"/></svg></button></div>
    </section>
    <section class="flex-1 min-h-0 rounded-l-md overflow-hidden bg-[#1d1d1d] text-[#b8b8b8]">
        <div class="h-[25px] mb-2 flex items-center pl-2 bg-[#303030] text-[#eee]"><button class="h-5 w-[30px] shrink-0 pl-[3px] flex items-center bg-[#282828] border border-[#3d3d3d] rounded" aria-label="Editor type"><svg class="size-4" viewBox="0 0 16 16" fill="currentColor" stroke="none"><rect x="1" y="1" width="15" height="6" rx="2"/><rect x="1" y="9" width="15" height="6" rx="2"/></svg></button></div>
        <div class="flex flex-col gap-2">
            <button class="h-7 pl-[7px] flex items-center" aria-label="Tool"><svg class="size-4 shrink-0"><use href="#i-tool"/></svg></button>
            <div class="flex flex-col">
                <button class="h-7 pl-[7px] flex items-center" aria-label="Render"><svg class="size-4 shrink-0"><use href="#i-render"/></svg></button>
                <button class="h-7 pl-[7px] flex items-center" aria-label="Output"><svg class="size-4 shrink-0"><use href="#i-output"/></svg></button>
                <button class="h-7 pl-[7px] flex items-center" aria-label="View layer"><svg class="size-4 shrink-0"><use href="#i-layers"/></svg></button>
                <button class="h-7 pl-[7px] flex items-center" aria-label="Scene"><svg class="size-4 shrink-0"><use href="#i-scene"/></svg></button>
                <button class="h-7 pl-[7px] flex items-center text-[#b5525a]" aria-label="World"><svg class="size-4 shrink-0"><use href="#i-world"/></svg></button>
            </div>
            <button class="h-7 pl-[7px] flex items-center text-[#e6e6e6]" aria-label="Collection"><svg class="size-4 shrink-0"><use href="#i-coll"/></svg></button>
            <div class="flex flex-col">
                <button class="h-7 pl-[7px] flex items-center text-[#c88048]" aria-label="Object"><svg class="size-4 shrink-0"><use href="#i-object"/></svg></button>
                <button class="h-7 pl-[5px] ml-[2px] flex items-center bg-[#303030] rounded-l text-[#6f9ef0]" aria-label="Modifiers"><svg class="size-4 shrink-0"><use href="#i-wrench"/></svg></button>
                <button class="h-7 pl-[7px] flex items-center text-[#5a82d0]" aria-label="Particles"><svg class="size-4 shrink-0"><use href="#i-parts"/></svg></button>
                <button class="h-7 pl-[7px] flex items-center text-[#5a82d0]" aria-label="Physics"><svg class="size-4 shrink-0"><use href="#i-phys"/></svg></button>
                <button class="h-7 pl-[7px] flex items-center text-[#5a82d0]" aria-label="Constraints"><svg class="size-4 shrink-0"><use href="#i-constr"/></svg></button>
                <button class="h-7 pl-[7px] flex items-center text-[#12b886]" aria-label="Data"><svg class="size-4 shrink-0"><use href="#i-mesh"/></svg></button>
                <button class="h-7 pl-[7px] flex items-center text-[#b5525a]" aria-label="Material"><svg class="size-4 shrink-0"><use href="#i-mat"/></svg></button>
            </div>
            <button class="h-7 pl-[7px] flex items-center text-[#b5525a]" aria-label="Texture"><svg class="size-4 shrink-0"><use href="#i-tex"/></svg></button>
        </div>
    </section>
</aside>
</div>

<script>
    // Spreadsheet domains: [label, icon, count, nested]
    const domains = [
        ['Mesh', 'mesh', '', 0],
        ['Vertex', 'vertex', '0', 1],
        ['Edge', 'edge', '0', 1],
        ['Face', 'face', '0', 1],
        ['Face Corner', 'corner', '0', 1],
        ['Curve', 'curve', '', 0],
        ['Control Point', 'cpoint', '0', 1],
        ['Spline', 'spline', '0', 1],
        ['Point Cloud', 'pcloud', '', 0],
        ['Point', 'point', '0', 1],
        ['Volume Grids', 'volume', '0', 0],
        ['Instances', 'instance', '2.5K', 0]
    ];
    document.getElementById('domains').innerHTML = domains.map(function ([label, icon, count, nested]) {
        const active = label === 'Vertex' ? 'bg-[#4772b3] text-white ' : '';
        const pad = nested ? 'pl-[13px] gap-[8px] ' : 'pl-0 gap-[7px] ';
        return `<li class="h-[22px] py-[2px] pr-[5px]"><button class="${active}${pad}relative w-full h-[18px] flex items-center rounded-r whitespace-nowrap">
            <svg class="size-4 shrink-0"><use href="#i-${icon}"/></svg><span>${label}</span>
            <span class="absolute right-1 opacity-60">${count}</span></button></li>`;
    }).join('');

    // Node header and socket colours
    const heads = {
        geo: 'bg-[#1d725e]', input: 'bg-[#83314a]', conv: 'bg-[#246283]',
        vec: 'bg-[#3c3c83]', tex: 'bg-[#79461d]', group: 'bg-[#1b1b1b]'
    };
    const socks = {
        geo: 'bg-[#00d6a3]', val: 'bg-[#a1a1a1]', int: 'bg-[#598c5c]', vec: 'bg-[#6363c7]', col: 'bg-[#c7c729]',
        bool: 'border border-[#8a7391]', rot: 'border border-[#84559c]', vecf: 'border border-[#5252a0]',
        valf: 'border border-[#808080]', none: 'border border-[#8a8a8a]', tex: 'bg-[#6d3f5f]'
    };

    // Rows: [kind, height, label, socket, value]
    const xyz = (a, b, c, hs) => [['num', hs[0], 'X', '', a], ['num', hs[1], 'Y', '', b], ['num', hs[2], 'Z', '', c]];
    const mathRows = (clamp, value) => [
        ['out', 9, 'Value', 'val'], ['gap', 2], ['sel', 9, 'Multiply'], [clamp, 9, 'Clamp', ''],
        ['in', 9, 'Value', 'val'], ['num', 8, 'Value', 'valf', value], ['gap', 2]
    ];
    const nodes = [
        [85, 67, 54, 'Group Input', 'group', [['out', 9, 'Geometry', 'geo'], ['out', 9, '', 'none'], ['gap', 1]]],
        [146, 127, 53, 'Grid', 'geo', [['out', 9, 'Mesh', 'geo'], ['out', 8, 'UV Map', 'vec'], ['gap', 1], ['num', 9, 'Size X', 'val', '1 m'], ['num', 8, 'Size Y', 'val', '1 m'], ['num', 9, 'Vertices X', 'int', '50'], ['num', 8, 'Vertices Y', 'int', '50'], ['gap', 1]]],
        [235, 145, 53, 'Cube', 'geo', [['out', 9, 'Mesh', 'geo'], ['out', 9, 'UV Map', 'vec'], ['in', 9, 'Size', 'vec'], ...xyz('0.01 m', '0.01 m', '0.01 m', [7, 8, 8]), ['gap', 1], ['num', 8, 'Vertices X', 'int', '2'], ['num', 8, 'Vertices Y', 'int', '2'], ['num', 9, 'Vertices Z', 'int', '2'], ['gap', 1]]],
        [306, 116, 53, 'Instance on Points', 'geo', [['out', 9, 'Instances', 'geo'], ['gap', 1], ['in', 9, 'Points', 'geo'], ['in', 8, 'Selection', 'bool'], ['in', 9, 'Instance', 'geo'], ['off', 8, 'Pick Instance', 'bool'], ['in', 8, 'Instance Index', 'int'], ['in', 8, 'Rotation', 'rot'], ...xyz('0°', '0°', '0°', [8, 8, 8]), ['gap', 1], ['in', 8, 'Scale', 'vecf'], ...xyz('1.000', '1.000', '1.000', [7, 8, 8]), ['gap', 2]]],
        [374, 162, 53, 'Position', 'input', [['out', 9, 'Position', 'vec'], ['gap', 1]]],
        [478, 135, 53, 'Separate XYZ', 'conv', [['out', 9, 'X', 'val'], ['out', 9, 'Y', 'val'], ['out', 8, 'Z', 'val'], ['gap', 1], ['in', 9, 'Vector', 'vec'], ['gap', 1]]],
        [501, 195, 53, 'Add', 'vec', [['out', 9, 'Vector', 'vec'], ['gap', 3], ['sel', 8, 'Add'], ['in', 8, 'Vector', 'vec'], ['in', 9, 'Vector', 'vecf'], ['num', 7, '', '', '0.500'], ['num', 8, '', '', '0.500'], ['num', 8, '', '', '0.000'], ['gap', 2]]],
        [591, 196, 53, 'Add', 'vec', [['out', 9, 'Vector', 'vec'], ['gap', 3], ['sel', 9, 'Add'], ['in', 8, 'Vector', 'vec'], ['in', 9, 'Vector', 'vec'], ['gap', 2]]],
        [359, 282, 53, 'Scene Time', 'input', [['out', 9, 'Seconds', 'val'], ['out', 8, 'Frame', 'val'], ['gap', 2]]],
        [429, 274, 53, 'Multiply', 'conv', mathRows('off', '0.100'), true],
        [502, 273, 53, 'Combine XYZ', 'conv', [['out', 9, 'Vector', 'vec'], ['gap', 1], ['in', 9, 'X', 'val'], ['num', 9, 'Y', 'valf', '0.000'], ['num', 8, 'Z', 'valf', '0.000'], ['gap', 1]]],
        [660, 177, 91, 'Image Texture', 'tex', [['out', 9, 'Color', 'col'], ['out', 8, 'Alpha', 'val'], ['gap', 2], ['sel', 9, 'Linear'], ['sel', 9, 'Repeat'], ['img', 9, 'Clipboard04.png', 'tex'], ['in', 8, 'Vector', 'vec'], ['num', 9, 'Frame', 'int', '0'], ['gap', 1]]],
        [760, 168, 53, 'Multiply', 'conv', mathRows('on', '0.470')],
        [845, 126, 53, 'Combine XYZ', 'conv', [['out', 9, 'Vector', 'vec'], ['gap', 1], ['in', 9, 'X', 'val'], ['in', 8, 'Y', 'val'], ['in', 9, 'Z', 'val'], ['gap', 1]]],
        [920, 101, 53, 'Set Position', 'geo', [['out', 9, 'Geometry', 'geo'], ['gap', 1], ['in', 9, 'Geometry', 'geo'], ['in', 8, 'Selection', 'bool'], ['in', 9, 'Position', 'vec'], ['in', 8, 'Offset', 'vecf'], ...xyz('0 m', '0 m', '0 m', [8, 8, 8]), ['gap', 1]]],
        [1066, 118, 53, 'Group Output', 'group', [['in', 9, 'Geometry', 'geo'], ['in', 9, '', 'none'], ['gap', 1]]]
    ];

    let uid = 0;
    function row([kind, h, label, sock, value]) {
        const dot = sock ? `<i class="${socks[sock]} ${kind === 'out' ? '-right-[2px]' : '-left-[2px]'} absolute top-[3px] size-[3px] rounded-full"></i>` : '';
        const id = 'f' + (uid++);
        let body = '';
        if (kind === 'out') body = `<span class="ml-auto mr-[3px]">${label}</span>`;
        if (kind === 'in') body = `<span class="ml-[4px]">${label}</span>`;
        if (kind === 'num') body = `<div class="flex flex-1 min-w-0 mx-[4px] h-[7px] leading-[7px] px-[5px] bg-[#545454]"><label for="${id}" class="whitespace-nowrap">${label}</label><input id="${id}" value="${value}" ${label ? '' : 'aria-label="Vector component"'} class="flex-1 w-0 min-w-0 outline-none ${label ? 'text-right' : 'text-center'}"></div>`;
        if (kind === 'sel') body = `<div class="relative flex-1 min-w-0 mx-[4px] h-[7px]"><select aria-label="${label}" class="block appearance-none w-full h-[7px] leading-[6px] pl-px bg-[#242424] outline outline-[#3d3d3d]"><option>${label}</option></select><svg class="absolute right-0 top-px size-[6px] pointer-events-none"><use href="#i-chev"/></svg></div>`;
        if (kind === 'on' || kind === 'off') body = `<input type="checkbox" id="${id}" ${kind === 'on' ? 'checked' : ''} class="appearance-none size-[5px] ml-[4px] mr-[2px] rounded-[1px] bg-[#545454] checked:bg-[#4f86dd] checked:border checked:border-[#cfe0ff]"><label for="${id}">${label}</label>`;
        if (kind === 'img') body = `<div class="flex flex-1 min-w-0 items-center mx-[4px] h-[7px] bg-[#242424]"><svg class="size-[6px] shrink-0 mr-[1px]"><use href="#i-image"/></svg><svg class="size-[5px] shrink-0"><use href="#i-chev"/></svg><input aria-label="Image name" value="${label}" class="flex-1 w-0 min-w-0 h-[7px] ml-px outline-none"><svg class="size-[7px] shrink-0"><use href="#i-shield"/></svg><svg class="size-[7px] shrink-0"><use href="#i-copy"/></svg><svg class="size-[7px] shrink-0"><use href="#i-folder"/></svg><svg class="size-[7px] shrink-0"><use href="#i-x"/></svg></div>`;
        return `<div class="relative flex items-center" style="height:${h}px">${body}${dot}</div>`;
    }
    document.getElementById('canvas').insertAdjacentHTML('beforeend', nodes.map(function ([x, y, w, title, head, rows, selected]) {
        return `<article class="${selected ? 'outline outline-white ' : ''}absolute rounded-[1px] bg-[#303030] shadow-[0_1px_4px_1px_rgb(0_0_0/0.6)] text-[5px] leading-[8px] text-[#d0d0d0] font-['Roboto','Liberation_Sans',sans-serif] whitespace-nowrap" style="left:${x}px;top:${y}px;width:${w}px">
            <h3 class="${heads[head]} h-2 pb-[2px] flex items-center rounded-t-[1px]"><svg class="size-[6px] mx-[2px]"><use href="#i-chev"/></svg>${title}</h3>${rows.map(row).join('')}</article>`;
    }).join(''));

    // Point instances seen in perspective
    let seed = 7;
    const rnd = () => (seed = (seed * 16807) % 2147483647) / 2147483647;
    const lerp = (a, b, t) => a + (b - a) * t;
    let d = '';
    function dot(x, y, s) {
        d += `M${(x - s / 2).toFixed(1)} ${(y - s / 2).toFixed(1)}h${s.toFixed(1)}v${s.toFixed(1)}h-${s.toFixed(1)}z`;
    }
    // left strips: [top x, top y, bottom x, bottom y]
    const strips = [
        [673, 210, 651, 384], [679, 209, 664, 382], [685, 208, 677, 380], [691, 207, 690, 378], [697, 207, 703, 375],
        [703, 205, 716, 373], [708, 205, 728, 370], [714, 206, 740, 367], [720, 207, 751, 348], [727, 206, 759, 334],
        [733, 205, 757, 281], [740, 204, 762, 275], [747, 203, 770, 270], [753, 202, 776, 268]
    ];
    strips.forEach(function ([x1, y1, x2, y2], i) {
        const n = Math.round((y2 - y1) / 3.7);
        for (let k = 0; k <= n; k++) {
            const t = k / n;
            const bend = i > 7 ? -Math.sin(t * Math.PI) * 4 : Math.sin(t * Math.PI) * (3 - i) * -0.6;
            const loose = i < 4 && t > 0.15 && t < 0.4 ? (rnd() - 0.5) * 9 : 0;
            dot(lerp(x1, x2, t) + bend + loose, lerp(y1, y2, t), lerp(3, 5.600, t));
        }
    });
    // middle slab
    for (let j = 0; j <= 19; j++) {
        const u = j / 19;
        const x1 = lerp(762, 866, u), y1 = lerp(203, 197, u) - Math.sin(u * 3) * 3;
        const x2 = lerp(830, 979, u), y2 = lerp(334, 316, u) + Math.sin(u * 3.100) * 5;
        for (let k = 0; k <= 40; k++) {
            const t = Math.pow(k / 40, 1.100);
            const b = Math.sin(t * Math.PI) * 5;
            const x = lerp(x1, x2, t) + b, y = lerp(y1, y2, t) - b;
            if (x < 806 && y > 272 && rnd() < 0.6) continue;
            if (u < 0.3 && t > 0.62 && rnd() < 0.2) continue;
            dot(x, y, lerp(2.600, 5, t));
        }
    }
    // wrinkled band between strips and slab
    for (let k = 0; k < 150; k++) {
        const t = rnd();
        dot(lerp(752, 815, t) + rnd() * 16, lerp(205, 268, t) + rnd() * 24 - 6, 4.200);
    }
    for (let k = 0; k < 12; k++) dot(lerp(790, 835, k / 11) + rnd() * 8, 275 + rnd() * 20 + k, 5);
    // right ridge
    for (let k = 0; k < 400; k++) {
        const t = Math.pow(rnd(), 0.900);
        const gap = rnd() < 0.55 ? rnd() * 9 : 30 + rnd() * 18 * (1 - Math.abs(t - 0.500));
        dot(lerp(868, 1020, t) + rnd() * 8, lerp(178, 236, t) + gap * (0.400 + t * 0.700), lerp(3.200, 5, t));
    }
    for (let k = 0; k < 120; k++) {
        const t = rnd();
        dot(lerp(880, 1020, t) + rnd() * 12, lerp(186, 250, t) + rnd() * 26, 4.400);
    }
    // far corner, rows widen towards the front edge
    for (let j = 0; j < 11; j++) {
        const t = j / 10, n = Math.round(4 + t * 11);
        for (let k = 0; k <= n; k++) {
            const u = k / n;
            dot(lerp(lerp(992, 1004, t), lerp(1022, 1111, t), u), lerp(lerp(248, 297, t), lerp(234, 290, t), u), 5.200);
        }
    }
    // lower edge of the ridge
    for (let k = 0; k < 90; k++) {
        const t = rnd();
        dot(lerp(930, 1006, t) + rnd() * 5, lerp(238, 293, t) + rnd() * 7 - 3, 4.800);
    }
    // spray above the surface
    for (let k = 0; k < 90; k++) {
        const t = Math.pow(rnd(), 0.800);
        dot(881 + (rnd() + rnd() - 1) * lerp(28, 60, t), lerp(124, 196, t), 3.300);
    }
    for (let k = 0; k < 70; k++) {
        const t = rnd();
        dot(772 + (rnd() + rnd() - 1) * 20, lerp(174, 204, t), 3.800);
    }
    for (let k = 0; k < 18; k++) dot(700 + rnd() * 75, 203 - rnd() * 12, 3);
    [[680, 92], [686, 145], [689, 169], [732, 172], [737, 171], [744, 179], [766, 149], [770, 147], [775, 149], [783, 147], [794, 145],
        [770, 159], [784, 152], [786, 160], [793, 169], [797, 179], [878, 87], [876, 97], [879, 101], [870, 118], [869, 124], [880, 121],
        [896, 123], [908, 135], [852, 137], [856, 136], [933, 142], [942, 140], [949, 141], [938, 148], [944, 151], [951, 157], [955, 156],
        [935, 159], [941, 171], [952, 170], [989, 180], [984, 188], [1014, 193], [1018, 208], [1040, 215], [1046, 225], [1058, 246],
        [1063, 253], [1083, 263], [985, 196], [764, 318], [782, 313], [783, 318], [784, 323], [785, 331], [770, 323], [771, 330], [763, 352], [753, 356],
        [780, 285], [782, 292], [794, 287], [807, 303], [818, 325], [829, 334], [840, 338]
    ].forEach(([x, y]) => dot(x, y, x > 960 || y > 280 ? 5.500 : 3.600));
    document.getElementById('cloud').setAttribute('d', d);
</script>
</body>
</html>
